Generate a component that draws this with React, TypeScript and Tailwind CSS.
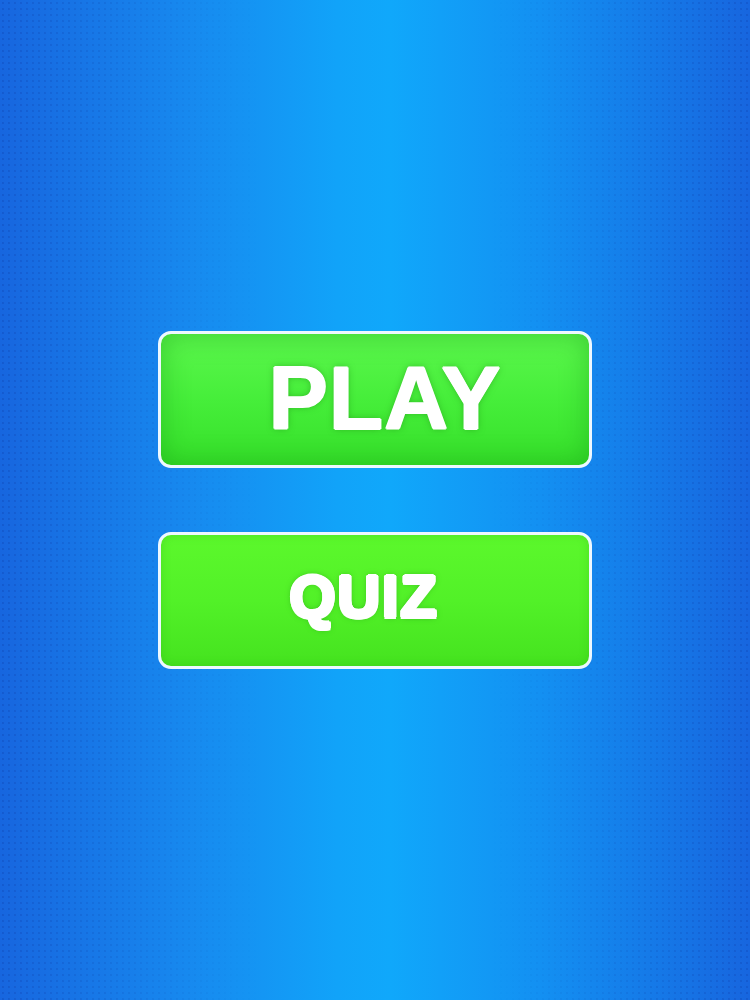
import React from "react";

function MenuButton({ label, big }: { label: string; big?: boolean }) {
  return (
    <button
      className={
        big
          ? "w-[434px] h-[137px] rounded-[13px] border-[3px] border-[#eef8ff] bg-[linear-gradient(to_bottom,#5cf74d,#46ee3a_50%,#36e02a)] shadow-[inset_0_0_28px_rgba(20,150,20,0.45)] flex items-center justify-center"
          : "w-[434px] h-[137px] rounded-[13px] border-[3px] border-[#eef8ff] bg-[linear-gradient(to_bottom,#5cf82c,#52f128_50%,#45e31f)] shadow-[inset_0_0_10px_rgba(40,160,20,0.25)] flex items-center justify-center"
      }
    >
      {big ? (
        <span className="ml-[20px] mt-[-2px] text-white font-bold text-[89px] leading-none tracking-[1px] [font-family:'Liberation_Sans',Arial,sans-serif] [text-shadow:1px_0_#fff,-1px_0_#fff,0_1px_#fff,0_-1px_#fff,0_0_7px_rgba(30,140,20,0.6)]">
          {label}
        </span>
      ) : (
        <span className="mr-[22px] mt-[-6px] text-white font-bold text-[59px] leading-none tracking-[2px] [font-family:'Liberation_Sans',Arial,sans-serif] [text-shadow:2px_0_#fff,-2px_0_#fff,0_2px_#fff,0_-2px_#fff,1.5px_1.5px_#fff,-1.5px_1.5px_#fff,1.5px_-1.5px_#fff,-1.5px_-1.5px_#fff,0_0_6px_rgba(30,140,20,0.7)]">
          {label}
        </span>
      )}
    </button>
  );
}

export default function App() {
  return (
    <div className="relative w-full h-[1000px] overflow-hidden bg-[linear-gradient(to_right,#1766df,#1789ef_25%,#11a3f9_45%,#10a8fb_52%,#1390f2_72%,#1766df)]">
      {/* faint dot texture */}
      <div className="absolute inset-0 bg-[radial-gradient(rgba(10,40,140,0.18)_1px,transparent_1.5px)] bg-[length:6px_6px] [mask-image:linear-gradient(to_right,black,transparent_35%,transparent_65%,black)]" />
      <div className="relative h-full flex flex-col items-center justify-center gap-[64px]">
        <MenuButton label="PLAY" big />
        <MenuButton label="QUIZ" />
      </div>
    </div>
  );
}
